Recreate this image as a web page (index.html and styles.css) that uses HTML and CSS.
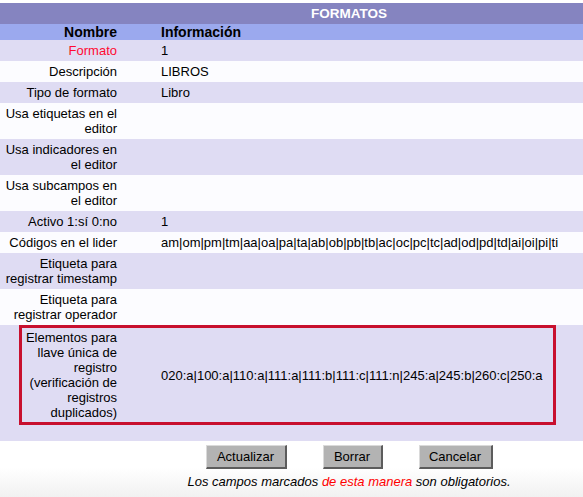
FILE: index.html
```html
<!DOCTYPE html>
<html lang="es">
<head>
<meta charset="utf-8">
<title>Formatos</title>
<link rel="stylesheet" href="styles.css">
</head>
<body>
<div class="page">
  <table class="form">
    <tr><th colspan="2" class="title">FORMATOS</th></tr>
    <tr class="cols"><th class="name">Nombre</th><th class="info">Información</th></tr>
    <tr class="alt"><td class="label req">Formato</td><td class="value">1</td></tr>
    <tr class="plain"><td class="label">Descripción</td><td class="value">LIBROS</td></tr>
    <tr class="alt"><td class="label">Tipo de formato</td><td class="value">Libro</td></tr>
    <tr class="plain"><td class="label">Usa etiquetas en el editor</td><td class="value"></td></tr>
    <tr class="alt"><td class="label">Usa indicadores en el editor</td><td class="value"></td></tr>
    <tr class="plain"><td class="label">Usa subcampos en el editor</td><td class="value"></td></tr>
    <tr class="alt"><td class="label">Activo 1:sí 0:no</td><td class="value">1</td></tr>
    <tr class="plain"><td class="label">Códigos en el lider</td><td class="value">am|om|pm|tm|aa|oa|pa|ta|ab|ob|pb|tb|ac|oc|pc|tc|ad|od|pd|td|ai|oi|pi|ti</td></tr>
    <tr class="alt"><td class="label">Etiqueta para registrar timestamp</td><td class="value"></td></tr>
    <tr class="plain"><td class="label">Etiqueta para registrar operador</td><td class="value"></td></tr>
    <tr class="alt">
      <td colspan="2" class="errcell">
        <table class="err">
          <tr>
            <td class="errlabel">Elementos para llave única de registro (verificación de registros duplicados)</td>
            <td class="errvalue">020:a|100:a|110:a|111:a|111:b|111:c|111:n|245:a|245:b|260:c|250:a</td>
          </tr>
        </table>
      </td>
    </tr>
  </table>
  <div class="actions">
    <button type="button" class="btn btn-update">Actualizar</button>
    <button type="button" class="btn btn-delete">Borrar</button>
    <button type="button" class="btn btn-cancel">Cancelar</button>
  </div>
  <p class="note">Los campos marcados <span class="note-req">de esta manera</span> son obligatorios.</p>
</div>
</body>
</html>
```

FILE: styles.css
```css
html {
  overflow: hidden;
  background: linear-gradient(to bottom, #ffffff 0, #ffffff 468px, #f1f1f1 497px);
  min-height: 100%;
}

body {
  margin: 0;
  padding-top: 3px;
  font-family: "Liberation Sans", Arial, Helvetica, sans-serif;
  font-size: 13px;
  line-height: 15px;
  color: #000;
}

.page {
  width: 698px;
}

.form {
  width: 698px;
  border-collapse: collapse;
  border-spacing: 0;
}

.form td,
.form th {
  padding: 0;
}

.form .title {
  background: #8584c0;
  color: #fff;
  font-size: 13.5px;
  font-weight: bold;
  text-align: center;
  padding: 3px 0;
}

.cols th {
  background: #9ba9ee;
  font-size: 14px;
  line-height: 16px;
  font-weight: bold;
}

.form .cols .name {
  text-align: right;
  padding-right: 3px;
}

.form .cols .info {
  text-align: left;
  padding-left: 41px;
}

.alt {
  background: #dfdcf3;
}

.plain {
  background: #fcfcff;
}

.form .label {
  box-sizing: border-box;
  width: 120px;
  text-align: right;
  vertical-align: middle;
  padding: 3px 3px 3px 2px;
}

.form .value {
  text-align: left;
  vertical-align: middle;
  white-space: nowrap;
  padding: 3px 0 3px 41px;
}

.req {
  color: #ff0a32;
}

.form .errcell {
  padding: 0 0 16px 19px;
  vertical-align: top;
}

.err {
  box-sizing: border-box;
  width: 537px;
  border: 3px solid #c8102e;
  border-collapse: separate;
  border-spacing: 0;
}

.form .errlabel {
  box-sizing: border-box;
  width: 98px;
  text-align: right;
  vertical-align: middle;
  padding: 2px 3px 2px 2px;
}

.form .errvalue {
  text-align: left;
  vertical-align: middle;
  white-space: nowrap;
  padding: 2px 0 2px 41px;
}

.actions {
  display: flex;
  justify-content: center;
  gap: 36px;
  margin-top: 4px;
}

.btn {
  box-sizing: border-box;
  height: 24px;
  margin: 0;
  padding: 0;
  font-family: "Liberation Sans", Arial, Helvetica, sans-serif;
  font-size: 13px;
  line-height: 21px;
  color: #000;
  text-align: center;
  background: #b3b3b3;
  border-style: solid;
  border-width: 1px 2px 2px 1px;
  border-color: #dadada #5c5c5c #5c5c5c #dadada;
  border-radius: 0;
}

.btn-update {
  width: 81px;
}

.btn-delete {
  width: 60px;
}

.btn-cancel {
  width: 74px;
}

.note {
  margin: 5px 0 0;
  text-align: center;
  font-style: italic;
  line-height: 15px;
}

.note-req {
  color: #ff0000;
}
```
